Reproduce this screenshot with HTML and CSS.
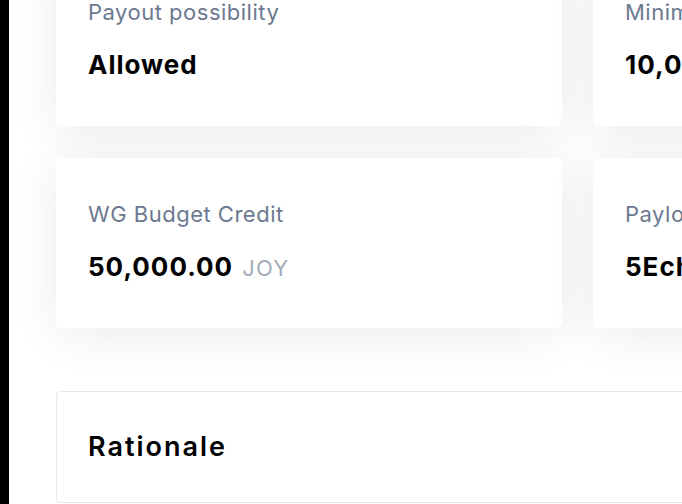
FILE: index.html
```html
<!DOCTYPE html>
<html>
<head>
<meta charset="utf-8">
<link rel="stylesheet" href="styles.css">
</head>
<body>
<div class="frame">
  <div class="edge"></div>
  <main class="content">
    <section class="grid">
      <div class="card">
        <div class="label">Payout possibility</div>
        <div class="value">Allowed</div>
      </div>
      <div class="card">
        <div class="label">Minimum Cash Out</div>
        <div class="value">10,000.00 <span class="unit">JOY</span></div>
      </div>
      <div class="card">
        <div class="label">WG Budget Credit</div>
        <div class="value">50,000.00 <span class="unit">JOY</span></div>
      </div>
      <div class="card">
        <div class="label">Payload</div>
        <div class="value">5EchUGWkMwMqfCH</div>
      </div>
    </section>
    <section class="rationale">
      <h2 class="rationale-title">Rationale</h2>
    </section>
  </main>
</div>
</body>
</html>
```

FILE: styles.css
```css
html, body {
  margin: 0;
  padding: 0;
  background: #ffffff;
  overflow: hidden;
}
.frame {
  display: flex;
  height: 504px;
  overflow: hidden;
}
.edge {
  flex: 0 0 9px;
  background: #000000;
}
.content {
  flex: 0 0 auto;
  width: 1100px;
  padding-left: 47px;
  margin-top: -44px;
  font-family: "Inter", "Noto Sans", sans-serif;
}
.grid {
  display: grid;
  grid-template-columns: 506px 506px;
  gap: 32px 31px;
}
.card {
  background: #ffffff;
  border-radius: 6px;
  height: 170px;
  box-sizing: border-box;
  padding: 41px 32px 0 32px;
  box-shadow: 0 6px 48px rgba(30, 40, 90, 0.09);
}
.label {
  font-size: 22px;
  line-height: 30px;
  letter-spacing: 0.5px;
  color: #6c7990;
  font-weight: 400;
  white-space: nowrap;
}
.value {
  margin-top: 22px;
  font-size: 26px;
  line-height: 32px;
  letter-spacing: 1px;
  font-weight: 700;
  color: #000000;
  white-space: nowrap;
}
.unit {
  margin-left: 2px;
  font-size: 22px;
  font-weight: 400;
  letter-spacing: 1.2px;
  color: #a3abb9;
}
.rationale {
  margin-top: 63px;
  height: 112px;
  box-sizing: border-box;
  border: 1px solid #e4e8f1;
  border-radius: 4px;
  background: #ffffff;
  display: flex;
  align-items: center;
  padding-left: 31px;
}
.rationale-title {
  margin: 0;
  font-size: 27px;
  font-weight: 600;
  letter-spacing: 2px;
  color: #000000;
  line-height: 36px;
}
```
